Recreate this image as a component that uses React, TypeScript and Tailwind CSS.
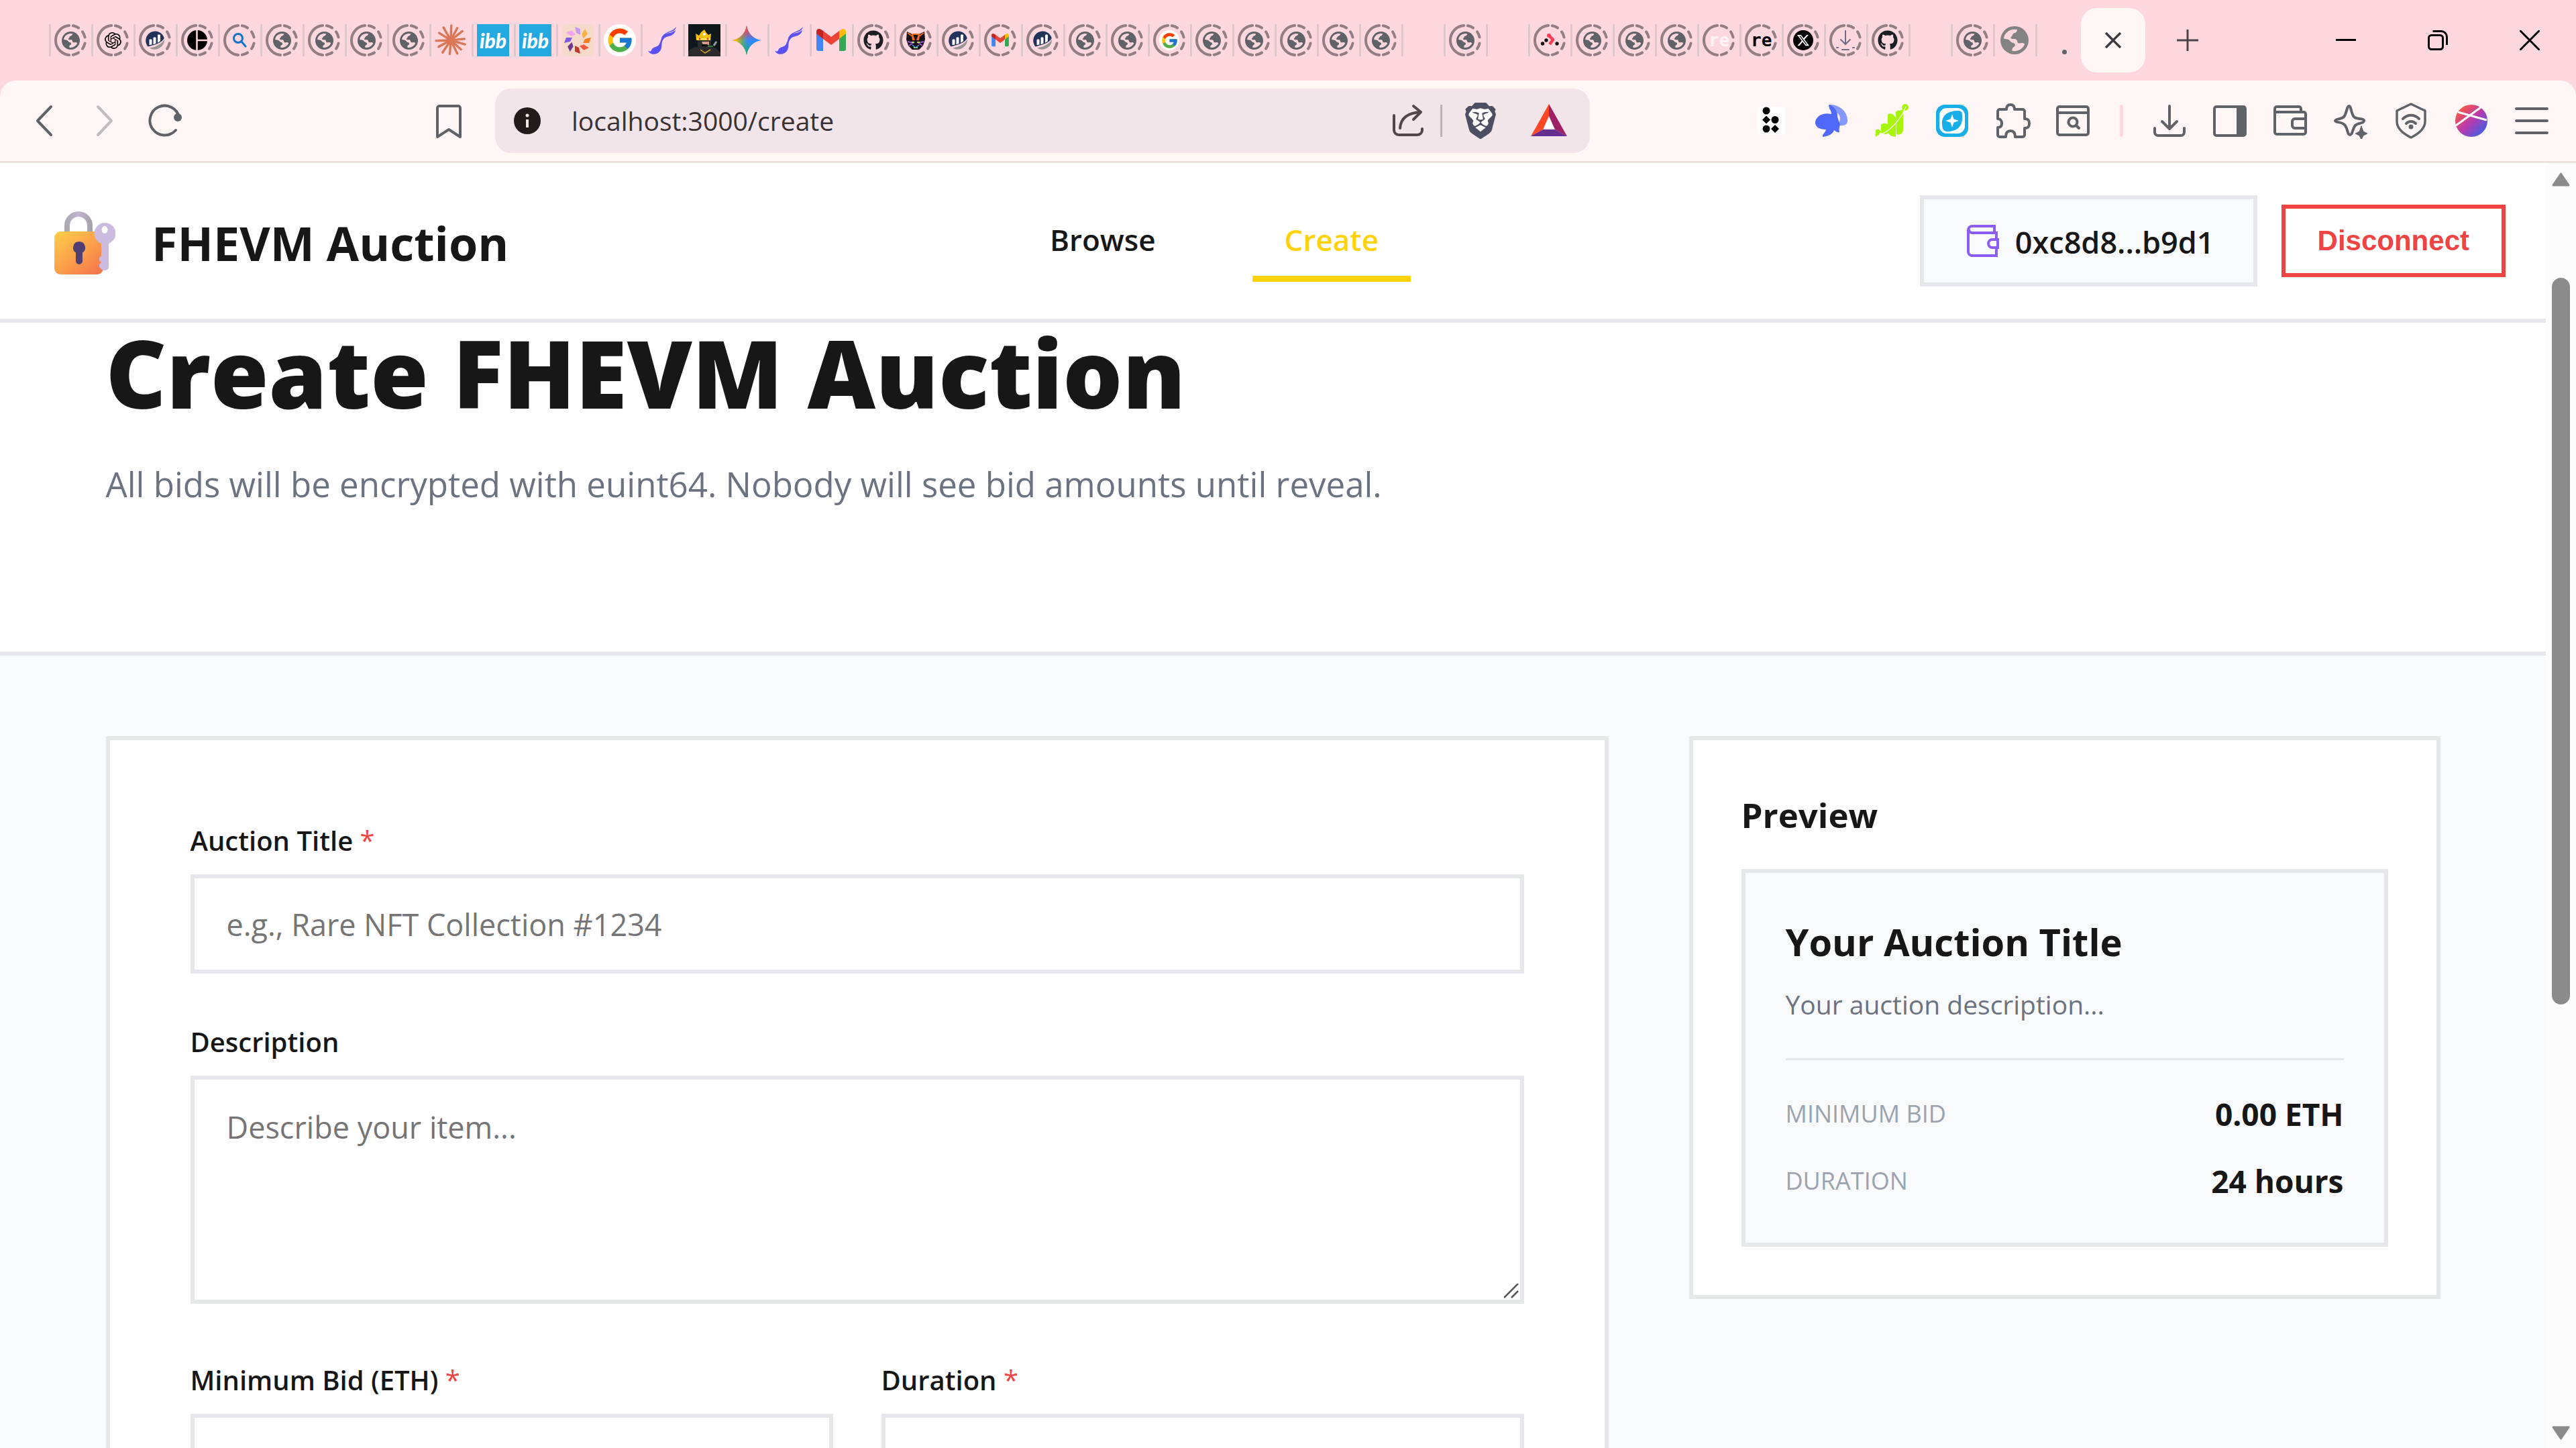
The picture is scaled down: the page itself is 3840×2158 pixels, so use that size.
import React from "react";
import { FaGithub, FaXTwitter } from "react-icons/fa6";
import { FcGoogle } from "react-icons/fc";
import { SiBrave, SiOpenai } from "react-icons/si";

type Box = { children?: React.ReactNode; size?: string; view?: string };

function Svg({ children, size = "size-12", view = "0 0 48 48" }: Box) {
  return (
    <svg className={`${size} block shrink-0`} viewBox={view} fill="none" aria-hidden="true">
      {children}
    </svg>
  );
}

/* ---------- favicons ---------- */

function arc(from: number, to: number) {
  const p = (a: number) => {
    const r = ((a - 90) * Math.PI) / 180;
    return `${(24 + 22 * Math.cos(r)).toFixed(2)} ${(24 + 22 * Math.sin(r)).toFixed(2)}`;
  };
  return `M${p(from)}A22 22 0 0 1 ${p(to)}`;
}

const ringPath = [arc(185, 355), arc(10, 33), arc(55, 78), arc(102, 125), arc(147, 170)].join("");

function Ringed({ children }: { children: React.ReactNode }) {
  return (
    <span className="grid size-12 place-items-center">
      <span className="col-start-1 row-start-1">
        <Svg>
          <path d={ringPath} stroke="#927e83" strokeWidth="4" strokeLinecap="round" />
        </Svg>
      </span>
      <span className="col-start-1 row-start-1 grid size-[30px] place-items-center">{children}</span>
    </span>
  );
}

function Globe({ size = "size-[27px]", color = "#5f6368" }: { size?: string; color?: string }) {
  return (
    <Svg size={size} view="0 0 26 26">
      <circle cx="13" cy="13" r="13" fill={color} />
      <path
        d="M3 11.5C3.6 6.6 7.8 3 13 3c1.2 0 2 .2 2.6.4-.4 1.6-1.2 2.6-3 3.100-1.600.4-1.100 2.100-2.300 2.900-.8.5-1 1.700-.1 2.200 1.100.6 3.400-.3 4.600.9 1.200 1.200.4 2.600 1.800 3.100 1.500.5 3.200-.6 4.400.1l1.500.9C20.800 20.400 17.200 23 13 23c-1 0-1.800-.1-2.200-.3-.2-1.700.4-3.200 1.900-3.800.9-.4 1.200-2 .4-2.800-1-1-2.600-.6-3.400-1.700-.9-1.300-2.100-2.400-3.600-2.400z"
        fill="#ffd7de"
      />
    </Svg>
  );
}

const Bars = () => (
  <Svg size="size-[30px]" view="0 0 30 30">
    <path d="M4.500 24.500A14 14 0 1 1 28.800 12C24 20 14 22 4.500 24.500Z" fill="#21325b" />
    <path d="M7 26.500C16 25 25 21 29 13.500A14.500 14.500 0 0 1 7 26.500Z" fill="#979695" />
    <path d="M7 22v-8h3v7.500M13 21v-10h3v9M19.500 18.500V7h3v9.500" fill="#fff" stroke="#fff" strokeWidth="1" />
  </Svg>
);

const Split = () => (
  <Svg size="size-[30px]" view="0 0 30 30">
    <circle cx="15" cy="15" r="15" fill="#000" />
    <path d="M14.500 0V30M14.500 15H30" stroke="#ffd7de" strokeWidth="2.500" />
  </Svg>
);

const SearchBlue = () => (
  <Svg size="size-[30px]" view="0 0 30 30">
    <circle cx="13" cy="12" r="6.500" stroke="#1173cd" strokeWidth="3" />
    <path d="M18 17l6 7" stroke="#1173cd" strokeWidth="3" strokeLinecap="round" />
  </Svg>
);

const Burst = () => (
  <Svg>
    {[2, 28, 52, 84, 106, 132, 154, 184, 214, 242, 268, 302, 330].map((a, i) => (
      <path
        key={a}
        d={i % 2 ? "M24 24V3.500" : "M24 24V2"}
        stroke="#d97757"
        strokeWidth="3.400"
        strokeLinecap="round"
        transform={`rotate(${a} 24 24)`}
      />
    ))}
    <circle cx="24" cy="24" r="6" fill="#d97757" />
  </Svg>
);

const Ibb = () => (
  <span className="grid size-12 place-items-center bg-[#23a8e0] font-['Lato'] text-[30px] leading-none font-black text-white italic">
    ibb
  </span>
);

const Petals = () => (
  <Svg>
    <rect width="48" height="48" rx="8" fill="#f5d9cb" />
    {["#c79bf0", "#fbb03b", "#f57c1f", "#ef5a3c", "#c0392f", "#6b3a8c", "#7b5be0", "#f2a0f0"].map((c, i) => (
      <path key={c} d="M20 4l8 3v9l-6-3z" fill={c} transform={`rotate(${i * 45} 24 24)`} />
    ))}
  </Svg>
);

const GoogleBig = () => (
  <span className="grid size-12 place-items-center rounded-full bg-white">
    <FcGoogle size={42} aria-hidden="true" />
  </span>
);

const GoogleSmall = () => (
  <span className="grid size-[30px] place-items-center rounded-full bg-white">
    <FcGoogle size={27} aria-hidden="true" />
  </span>
);

const Feather = () => (
  <Svg>
    <path
      d="M45 4C39 12 26 11 23 21c-1.500 5-2 7-4 10-3 4-9 2-11 8-1 2-3 2-5 0 2 7 13 8 18 1 4-6 1-11 4-16 2-4 5-5 9-6 5-1 9-4 10-9-5 4-11 4-15 6 5-4 15-3 16-11Z"
      fill="#5a51f0"
    />
  </Svg>
);

const King = () => (
  <Svg>
    <rect width="48" height="48" fill="#0e1719" />
    <path d="M0 48V40C6 34 12 34 14 34V22H34V34C40 34 44 38 48 42V48Z" fill="#2b2b2d" />
    <path d="M12 24L11 14l5 3 3-5 5-4 3 5 3 3 4-2-1 10Z" fill="#f4c20d" />
    <path d="M13 21H33v3H13Z" fill="#fbe04a" />
    <circle cx="24" cy="15" r="2" fill="#f5f5f5" />
    <circle cx="17" cy="22" r="1.500" fill="#e23b2e" />
    <circle cx="29" cy="22" r="1.500" fill="#e23b2e" />
    <path d="M20 26H31V31H22Z" fill="#d79a86" />
    <path d="M20 30h9v3h-9z" fill="#0a0a0a" />
    <path d="M29 33H37" stroke="#3a9a3f" strokeWidth="1.500" />
    <path d="M38 32l4-6" stroke="#9aa0a3" strokeWidth="3" />
    <path d="M18 38l7 5 8-5" stroke="#c9a227" strokeWidth="1.500" />
  </Svg>
);

const Gemini = () => (
  <Svg>
    <defs>
      <linearGradient id="gm" x1="8" y1="24" x2="34" y2="24" gradientUnits="userSpaceOnUse">
        <stop stopColor="#fbbc04" />
        <stop offset=".35" stopColor="#6aa870" />
        <stop offset=".7" stopColor="#3186ff" />
      </linearGradient>
      <linearGradient id="gr" x1="22" y1="3" x2="24" y2="24" gradientUnits="userSpaceOnUse">
        <stop stopColor="#f94543" />
        <stop offset=".35" stopColor="#f94543" stopOpacity=".8" />
        <stop offset="1" stopColor="#f94543" stopOpacity="0" />
      </linearGradient>
      <linearGradient id="gg" x1="24" y1="46" x2="24" y2="26" gradientUnits="userSpaceOnUse">
        <stop stopColor="#08b962" />
        <stop offset="1" stopColor="#08b962" stopOpacity="0" />
      </linearGradient>
    </defs>
    {["gm", "gr", "gg"].map((g) => (
      <path key={g} d="M24 2C26 14 34 22 46 24C34 26 26 34 24 46C22 34 14 26 2 24C14 22 22 14 24 2Z" fill={`url(#${g})`} />
    ))}
  </Svg>
);

const Gmail = ({ size = "size-12" }: { size?: string }) => (
  <Svg size={size}>
    <path d="M2 13v24a3 3 0 0 0 3 3h7V18Z" fill="#4285f4" />
    <path d="M46 13v24a3 3 0 0 1-3 3h-7V18Z" fill="#34a853" />
    <path d="M36 10v12l10-8v-3c0-4-4-5-7-3Z" fill="#fbbc04" />
    <path d="M12 22V10l12 9 12-9v12L24 31Z" fill="#ea4335" />
    <path d="M2 11v3l10 8V10L9 8C6 6 2 7 2 11Z" fill="#c5221f" />
  </Svg>
);

const Fox = () => (
  <Svg size="size-[30px]" view="0 0 30 30">
    <path d="M2 2l8 4h10l8-4 1 12-3 9-6 6H10l-6-6-3-9Z" fill="#161115" />
    <path d="M3 4l7 5 1 6M27 4l-7 5-1 6M10 6h10l-3 9M13 15L10 6" stroke="#f26b21" strokeWidth="2" />
    <path d="M3 17l8 2-6 4M27 17l-8 2 6 4" stroke="#9a55d8" strokeWidth="2" />
    <path d="M9 18h4M17 18h4M12 26h6" stroke="#b6e04a" strokeWidth="2" />
    <path d="M10 22l5 4 5-4" stroke="#4aa0e8" strokeWidth="1.500" />
  </Svg>
);

const RedDots = () => (
  <Svg size="size-[30px]" view="0 0 30 30">
    <path d="M14 8l6 6-5 7" stroke="#ff3b55" strokeWidth="4.500" strokeLinejoin="round" />
    <circle cx="14" cy="8" r="3" fill="#ff3b55" />
    <circle cx="10" cy="15" r="2.700" fill="#111" />
    <circle cx="4.500" cy="20" r="2.700" fill="#111" />
    <circle cx="26" cy="20" r="2.700" fill="#111" />
  </Svg>
);

const Re = ({ light = false }: { light?: boolean }) => (
  <span
    className={`font-['DejaVu_Sans_Mono'] text-[26px] leading-none font-bold ${light ? "text-[#fff5f6]" : "text-black"}`}
  >
    re
  </span>
);

const XMark = () => (
  <span className="grid size-[30px] place-items-center rounded-full bg-black">
    <FaXTwitter size={20} color="#fff" aria-hidden="true" />
  </span>
);

const ArrowDown = () => (
  <Svg size="size-[30px]" view="0 0 30 30">
    <path d="M15 1v19M8 14l7 7 7-7M2 26h2M26 26h2M10 29h10" stroke="#6f6a86" strokeWidth="2" strokeLinecap="round" />
  </Svg>
);

const ringGlobe = (
  <Ringed>
    <Globe />
  </Ringed>
);
const ringBars = (
  <Ringed>
    <Bars />
  </Ringed>
);
const ringGithub = (
  <Ringed>
    <FaGithub size={30} color="#1b1f23" aria-hidden="true" />
  </Ringed>
);

const tabs: (React.ReactNode | null)[] = [
  ringGlobe,
  <Ringed>
    <SiOpenai size={25} color="#000" aria-hidden="true" />
  </Ringed>,
  ringBars,
  <Ringed>
    <Split />
  </Ringed>,
  <Ringed>
    <SearchBlue />
  </Ringed>,
  ringGlobe,
  ringGlobe,
  ringGlobe,
  ringGlobe,
  <Burst />,
  <Ibb />,
  <Ibb />,
  <Petals />,
  <GoogleBig />,
  <Feather />,
  <King />,
  <Gemini />,
  <Feather />,
  <Gmail />,
  ringGithub,
  <Ringed>
    <Fox />
  </Ringed>,
  ringBars,
  <Ringed>
    <Gmail size="size-[28px]" />
  </Ringed>,
  ringBars,
  ringGlobe,
  ringGlobe,
  <Ringed>
    <GoogleSmall />
  </Ringed>,
  ringGlobe,
  ringGlobe,
  ringGlobe,
  ringGlobe,
  ringGlobe,
  null,
  ringGlobe,
  null,
  <Ringed>
    <RedDots />
  </Ringed>,
  ringGlobe,
  ringGlobe,
  ringGlobe,
  <Ringed>
    <Re light />
  </Ringed>,
  <Ringed>
    <Re />
  </Ringed>,
  <Ringed>
    <XMark />
  </Ringed>,
  <Ringed>
    <ArrowDown />
  </Ringed>,
  ringGithub,
  null,
  ringGlobe,
  <span className="grid size-12 place-items-center">
    <Globe size="size-[42px]" color="#838383" />
  </span>,
];

function TabStrip() {
  return (
    <div className="flex h-[120px] items-center bg-[#ffd7de] pl-[73px]">
      {tabs.map((icon, i) => (
        <button
          key={i}
          type="button"
          aria-label={`Tab ${i + 1}`}
          className="flex h-12 w-[63px] shrink-0 items-center border-l-[3px] border-[#dfc8cb] pl-[5px]"
        >
          {icon}
        </button>
      ))}
      <span className="flex h-12 w-[68px] shrink-0 items-end justify-end border-l-[3px] border-[#dfc8cb] pr-[21px] pb-[3px]">
        <span className="size-[7px] rounded-full bg-[#5f6368]" />
      </span>
      <button
        type="button"
        aria-label="Close tab"
        className="grid h-24 w-24 shrink-0 place-items-center rounded-3xl bg-[#fff7f6]"
      >
        <Svg size="size-6" view="0 0 24 24">
          <path d="M1 1l22 22M23 1L1 23" stroke="#3b3b40" strokeWidth="3.500" />
        </Svg>
      </button>
      <button type="button" aria-label="New tab" className="ml-[45px] grid h-12 w-9 shrink-0 place-items-center">
        <Svg size="size-8" view="0 0 32 32">
          <path d="M16 0v32M0 16h32" stroke="#4a4448" strokeWidth="3" />
        </Svg>
      </button>
      <div className="ml-auto flex items-center gap-[107px] pr-[54px]">
        <button type="button" aria-label="Minimize">
          <Svg size="size-[30px]" view="0 0 30 30">
            <path d="M0 14.500h30" stroke="#000" strokeWidth="3" />
          </Svg>
        </button>
        <button type="button" aria-label="Restore">
          <Svg size="size-[30px]" view="0 0 30 30">
            <rect x="1.500" y="7.500" width="21" height="21" rx="4" stroke="#000" strokeWidth="3" />
            <path d="M7.500 1.500H20a8.500 8.500 0 0 1 8.500 8.500v12" stroke="#000" strokeWidth="3" />
          </Svg>
        </button>
        <button type="button" aria-label="Close window">
          <Svg size="size-[30px]" view="0 0 30 30">
            <path d="M0 0l30 30M30 0L0 30" stroke="#000" strokeWidth="3" />
          </Svg>
        </button>
      </div>
    </div>
  );
}

/* ---------- toolbar ---------- */

function Tool({ label, children }: { label: string; children: React.ReactNode }) {
  return (
    <button type="button" aria-label={label} className="grid size-[54px] shrink-0 place-items-center text-[#5f6368]">
      <svg
        className="size-[54px]"
        viewBox="0 0 54 54"
        fill="none"
        stroke="currentColor"
        strokeWidth="4"
        strokeLinecap="round"
        strokeLinejoin="round"
        aria-hidden="true"
      >
        {children}
      </svg>
    </button>
  );
}

function Toolbar() {
  return (
    <div className="bg-[#ffd7de]">
      <div className="flex h-[123px] items-center rounded-t-3xl border-b-[3px] border-[#f0dfe0] bg-[#fff7f6] pr-[39px] pl-[39px]">
        <div className="flex gap-9">
          <Tool label="Back">
            <path d="M37 6L17 27l20 21" />
          </Tool>
          <Tool label="Forward">
            <path d="M17 6l20 21-20 21" stroke="#c2bdbd" />
          </Tool>
          <Tool label="Reload">
            <path d="M48 22A22 22 0 1 0 43 41" />
            <circle cx="46" cy="22" r="6" fill="currentColor" stroke="none" />
          </Tool>
        </div>
        <div className="ml-[369px]">
          <Tool label="Bookmark this page">
            <path d="M10 8a3 3 0 0 1 3-3h28a3 3 0 0 1 3 3v43L27 40 10 51Z" />
          </Tool>
        </div>
        <div className="ml-[42px] flex h-24 min-w-0 flex-1 items-center rounded-3xl bg-[#f2e5e9] pr-[34px] pl-7">
          <Svg size="size-10" view="0 0 40 40">
            <circle cx="20" cy="20" r="20" fill="#231a1c" />
            <path d="M20 18v12" stroke="#f2e5e9" strokeWidth="4" />
            <circle cx="20" cy="12" r="2.500" fill="#f2e5e9" />
          </Svg>
          <input
            type="text"
            aria-label="Address"
            defaultValue="localhost:3000/create"
            className="ml-[46px] h-16 min-w-0 flex-1 bg-transparent pb-0.5 text-[39px] text-[#3a3133] outline-none"
          />
          <button type="button" aria-label="Share" className="size-[54px]">
            <Svg size="size-[54px]" view="0 0 54 54">
              <path
                d="M6 19v22a7 7 0 0 0 7 7h28a7 7 0 0 0 7-7v-2M15 38C16 24 25 15 46 14M35 5l11 9-11 11"
                stroke="#51474a"
                strokeWidth="4"
                strokeLinecap="round"
                strokeLinejoin="round"
              />
            </Svg>
          </button>
          <span className="ml-[21px] h-12 w-[3px] bg-[#b9b3b8]" />
          <button type="button" aria-label="Brave Shields" className="ml-[30px] size-[54px]">
            <svg className="size-[54px]" viewBox="0 0 54 54" aria-hidden="true">
              <path d="M12 10h30l3 10-6 20-12 8-12-8-6-20Z" fill="#fff" />
              <SiBrave size={54} color="#4c4f62" />
            </svg>
          </button>
          <button type="button" aria-label="Rewards" className="ml-12 size-[54px]">
            <Svg size="size-[54px]" view="0 0 54 54">
              <path d="M27 2L18 38H36Z" fill="#fff" />
              <path d="M27 2L0 50L18 40L27 20Z" fill="#ff4724" />
              <path d="M27 2L54 50L36 40L27 20Z" fill="#9e1f63" />
              <path d="M0 50L18 40H36L54 50Z" fill="#662d91" />
            </Svg>
          </button>
        </div>
        <div className="ml-[243px] flex items-center gap-9">
          <Tool label="Dots extension">
            <rect x="6" y="6" width="42" height="42" rx="6" fill="#fff" stroke="none" />
            <g fill="#000" stroke="none">
              <circle cx="20" cy="12" r="5.500" />
              <path d="M20 19.500l6 6-6 6-6-6Z" />
              <circle cx="33" cy="25.500" r="5.500" />
              <circle cx="20" cy="39" r="5.500" />
              <path d="M33 33l6 6-6 6-6-6Z" />
            </g>
          </Tool>
          <Tool label="Rabbit wallet">
            <g stroke="none">
              <path d="M24 3c14-1 28 10 27 25-1 7-10 7-14 5C44 20 38 14 24 10Z" fill="#8697ff" />
              <path d="M23 3c8 2 14 10 13 18l4 12c-1 4-2 6-1 11-4 1-6-2-8-3-1 5-8 9-17 10-1-4 4-6 5-11C8 40 3 36 3 29c1-9 12-15 24-12 0-6-4-8-4-14Z" fill="#5069fb" />
            </g>
          </Tool>
          <Tool label="Green extension">
            <g fill="#a6f50a" stroke="none">
              <circle cx="47" cy="7" r="5" />
              <path d="M33 14c3-4 6-1 11-4v30c0 6-5 9-10 7Z" />
              <path d="M21 18c5-4 9 0 12 5v28c-5 0-9-2-12-7Z" />
              <path d="M11 33c4-4 8-2 11 0v12c-4 4-8 1-11 0Z" />
              <path d="M3 41c4-3 7 0 8 2l-4 6-4 2Z" />
            </g>
            <path d="M5 50C24 44 40 26 48 6" stroke="#fff7f6" strokeWidth="1.200" />
          </Tool>
          <Tool label="Compass extension">
            <rect x="3" y="3" width="48" height="48" rx="13" fill="#17aeea" stroke="none" />
            <rect x="8" y="8" width="38" height="38" rx="11" fill="#fff" stroke="none" />
            <path d="M12 30C12 18 22 12 36 12c7 0 6 5 6 12 0 12-9 19-22 19-7 0-8-6-8-13Z" fill="#17aeea" stroke="none" />
            <path d="M27 17l2.500 7.500L37 27l-7.500 2.500L27 37l-2.500-7.500L17 27l7.500-2.500Z" fill="#fff" stroke="none" />
          </Tool>
          <Tool label="Extensions">
            <path d="M5 13a3 3 0 0 1 3-3h10c0-5 2-7 6-7s6 2 6 7h12a3 3 0 0 1 3 3v11c5 0 7 2 7 7s-2 7-7 7v10a3 3 0 0 1-3 3H31c0-5-2-9-7-9s-7 4-7 9H8a3 3 0 0 1-3-3V37c4 0 6-2 6-6s-2-7-6-7Z" />
          </Tool>
          <Tool label="Search tabs">
            <rect x="4" y="6" width="46" height="42" rx="3" />
            <path d="M4 15h46" />
            <circle cx="27" cy="29" r="6.500" />
            <path d="M32 34l4 4" />
          </Tool>
          <span className="grid w-[18px] place-items-center">
            <span className="h-12 w-[5px] rounded-full bg-[#ffd7de]" />
          </span>
          <Tool label="Downloads">
            <path d="M27 5v34M16 28l11 11 11-11M5 38v6a5 5 0 0 0 5 5h34a5 5 0 0 0 5-5v-6" />
          </Tool>
          <Tool label="Sidebar">
            <rect x="4" y="6" width="46" height="43" rx="3" />
            <path d="M39 7h9v41H39Z" fill="currentColor" />
          </Tool>
          <Tool label="Wallet">
            <path d="M4 13V9a3 3 0 0 1 3-3h33a3 3 0 0 1 3 3v4M4 9v35a3 3 0 0 0 3 3h40a3 3 0 0 0 3-3V17a3 3 0 0 0-3-3H4M50 24H34a4 4 0 0 0-4 4v6a4 4 0 0 0 4 4h16" />
          </Tool>
          <Tool label="Leo assistant">
            <path d="M25 5c3 0 3 14 8 17s14 1 14 5-9 3-13 7-4 14-8 14-3-10-8-15S4 30 4 27s9-2 13-6 4-16 8-16Z" />
            <path d="M43 35l3 8 6 3-6 3-3 6-3-6-6-3 6-3Z" fill="currentColor" strokeWidth="1" />
          </Tool>
          <Tool label="VPN">
            <path d="M27 2l21 10v16c0 10-9 18-21 24C15 46 6 38 6 28V12Z" strokeWidth="3.500" />
            <path d="M15 24c7-7 17-7 24 0M20 31c4-4 10-4 14 0" />
            <circle cx="27" cy="36" r="3.500" fill="currentColor" stroke="none" />
          </Tool>
          <Tool label="Profile">
            <defs>
              <linearGradient id="av" x1="8" y1="8" x2="46" y2="46" gradientUnits="userSpaceOnUse">
                <stop stopColor="#ff5a3c" />
                <stop offset=".5" stopColor="#b93aad" />
                <stop offset="1" stopColor="#3f5fe8" />
              </linearGradient>
            </defs>
            <circle cx="27" cy="27" r="24" fill="url(#av)" stroke="none" />
            <path d="M4 34L41 7M7 14l43 12" stroke="#fff" strokeWidth="3" strokeLinecap="butt" />
          </Tool>
          <Tool label="Menu">
            <path d="M4 9h46M4 27h46M4 45h46" />
          </Tool>
        </div>
      </div>
    </div>
  );
}

/* ---------- page ---------- */

function LockWithKey() {
  return (
    <svg className="h-24 w-[92px] shrink-0" viewBox="0 0 92 96" fill="none" aria-hidden="true">
      <defs>
        <linearGradient id="body" x1="10" y1="32" x2="60" y2="96" gradientUnits="userSpaceOnUse">
          <stop stopColor="#ffc94a" />
          <stop offset=".6" stopColor="#fb9a4b" />
          <stop offset="1" stopColor="#f5774c" />
        </linearGradient>
        <linearGradient id="shackle" x1="16" y1="0" x2="58" y2="0" gradientUnits="userSpaceOnUse">
          <stop stopColor="#a9a7ac" />
          <stop offset=".5" stopColor="#c4b3d0" />
          <stop offset="1" stopColor="#a3a1a6" />
        </linearGradient>
      </defs>
      <path d="M20 40V22a17 17 0 0 1 34 0v18" stroke="url(#shackle)" strokeWidth="8" />
      <rect x="1" y="31" width="73" height="64" rx="9" fill="url(#body)" />
      <path d="M38 46a9 9 0 0 1 5 16.500V75a5 5 0 0 1-10 0V62.500A9 9 0 0 1 38 46Z" fill="#4f3f72" />
      <path
        d="M76 18a16 16 0 0 1 6 31v35a5 5 0 0 1-5 5h-4l-5-5v-4l3-3-3-3v-4l3-3V49a16 16 0 0 1 5-31Zm0 5a4.500 5.500 0 1 0 .1 0Z"
        fill="#cbbcdf"
        fillRule="evenodd"
      />
    </svg>
  );
}

function Header() {
  return (
    <header className="flex h-[238px] shrink-0 items-center justify-between border-b-[6px] border-[#e5e7eb] bg-white px-[60px]">
      <a href="#home" className="flex items-center gap-[54px] pt-1.5 pl-5">
        <LockWithKey />
        <span className="text-[70px] leading-none font-bold">FHEVM Auction</span>
      </a>
      <nav className="flex gap-24 text-[44px] leading-[60px] font-semibold">
        <a href="#browse" className="border-b-[9px] border-transparent px-12 pt-7 pb-6">
          Browse
        </a>
        <a href="#create" aria-current="page" className="border-b-[9px] border-[#ffd208] px-12 pt-7 pb-6 text-[#ffd208]">
          Create
        </a>
      </nav>
      <div className="flex items-center gap-9">
        <div className="flex h-[136px] items-center gap-6 border-[6px] border-[#e5e7eb] bg-[#f9fafb] pr-[58px] pl-16 text-[45px] leading-[60px] font-semibold">
          <Svg view="0 0 48 48">
            <path
              d="M41 12V2H8a6 6 0 0 0-6 6v32a6 6 0 0 0 6 6h36V34M44 22V12H8a5 5 0 0 1-5-5M46 22h-8a6 6 0 0 0 0 12h8Z"
              stroke="#8b5cf6"
              strokeWidth="4"
            />
          </Svg>
          <span className="pt-1">0xc8d8...b9d1</span>
        </div>
        <button
          type="button"
          className="h-[108px] border-[6px] border-[#ef4444] px-12 font-['Liberation_Sans'] text-[42px] leading-none font-bold text-[#ef4444]"
        >
          Disconnect
        </button>
      </div>
    </header>
  );
}

function FieldLabel({ htmlFor, text, required }: { htmlFor: string; text: string; required?: boolean }) {
  return (
    <label htmlFor={htmlFor} className="mb-5 block text-[40px] leading-[60px] font-semibold">
      {text}
      {required && <span className="font-normal text-[#ef4444]"> *</span>}
    </label>
  );
}

const field =
  "block w-full border-[6px] border-[#e5e7eb] bg-white px-12 text-[45px] leading-none outline-none placeholder:text-[#757575]";

function AuctionForm() {
  return (
    <form className="flex flex-col gap-[72px] border-[6px] border-[#e5e7eb] bg-white p-[120px]">
      <div>
        <FieldLabel htmlFor="title" text="Auction Title" required />
        <input id="title" type="text" placeholder="e.g., Rare NFT Collection #1234" className={`${field} h-[148px]`} />
      </div>
      <div className="pb-3">
        <FieldLabel htmlFor="description" text="Description" />
        <div className="relative">
          <textarea
            id="description"
            placeholder="Describe your item..."
            className={`${field} h-[340px] resize-none py-12`}
          />
          <svg className="absolute right-2 bottom-2 size-[22px]" viewBox="0 0 22 22" aria-hidden="true">
            <path d="M0 21L21 0M11 21L21 11" stroke="#555" strokeWidth="2.500" />
          </svg>
        </div>
      </div>
      <div className="grid grid-cols-2 gap-[72px]">
        <div>
          <FieldLabel htmlFor="minimum-bid" text="Minimum Bid (ETH)" required />
          <input id="minimum-bid" type="text" className={`${field} h-[148px]`} />
        </div>
        <div>
          <FieldLabel htmlFor="duration" text="Duration" required />
          <input id="duration" type="text" className={`${field} h-[148px]`} />
        </div>
      </div>
    </form>
  );
}

function PreviewRow({ name, value }: { name: string; value: string }) {
  return (
    <div className="flex items-center justify-between leading-[64px]">
      <dt className="text-[36px] text-[#9ca3af]">{name}</dt>
      <dd className="text-[46px] font-bold">{value}</dd>
    </div>
  );
}

function Preview() {
  return (
    <aside className="self-start border-[6px] border-[#e5e7eb] bg-white p-[72px]">
      <h2 className="mb-[42px] text-[51px] leading-[78px] font-bold">Preview</h2>
      <div className="border-[6px] border-[#e5e7eb] bg-[#f9fafb] p-[60px]">
        <h3 className="text-[56px] leading-[84px] font-bold">Your Auction Title</h3>
        <p className="mt-5 text-[39px] leading-[64px] text-[#6b7280]">Your auction description...</p>
        <dl className="mt-12 flex flex-col gap-9 border-t-[3px] border-[#e5e7eb] pt-12">
          <PreviewRow name="MINIMUM BID" value="0.00 ETH" />
          <PreviewRow name="DURATION" value="24 hours" />
        </dl>
      </div>
    </aside>
  );
}

function Scrollbar() {
  return (
    <div className="flex w-[45px] shrink-0 flex-col items-center bg-[#fcfcfc] pt-3.5 pb-3" aria-hidden="true">
      <Svg size="h-[21px] w-[27px]" view="0 0 27 21">
        <path d="M13.500 2L25 19H2Z" fill="#8b8b8b" stroke="#8b8b8b" strokeWidth="3" strokeLinejoin="round" />
      </Svg>
      <span className="grow-[136] basis-0" />
      <span className="w-[27px] grow-[1083] basis-0 rounded-full bg-[#8b8b8b]" />
      <span className="grow-[628] basis-0" />
      <Svg size="h-[21px] w-[27px]" view="0 0 27 21">
        <path d="M13.500 19L25 2H2Z" fill="#8b8b8b" stroke="#8b8b8b" strokeWidth="3" strokeLinejoin="round" />
      </Svg>
    </div>
  );
}

export default function App() {
  return (
    <div className="flex h-screen flex-col overflow-hidden font-['Open_Sans','Noto_Sans',sans-serif] text-[#171717]">
      <TabStrip />
      <Toolbar />
      <div className="flex min-h-0 flex-1">
        <div className="flex min-w-0 flex-1 flex-col overflow-hidden bg-[#f9fafb]">
          <Header />
          <main>
            <section className="border-b-[6px] border-[#e5e7eb] bg-white">
              <div className="mx-auto max-w-[3600px] px-[60px] pt-1 pb-[210px]">
                <h1 className="text-[140px] leading-none font-extrabold">Create FHEVM Auction</h1>
                <p className="mt-14 text-[51px] leading-[80px] text-[#6b7280]">
                  All bids will be encrypted with euint64. Nobody will see bid amounts until reveal.
                </p>
              </div>
            </section>
            <div className="mx-auto grid max-w-[3600px] grid-cols-[2fr_1fr] gap-[120px] px-[60px] pt-[120px]">
              <AuctionForm />
              <Preview />
            </div>
          </main>
        </div>
        <Scrollbar />
      </div>
    </div>
  );
}
